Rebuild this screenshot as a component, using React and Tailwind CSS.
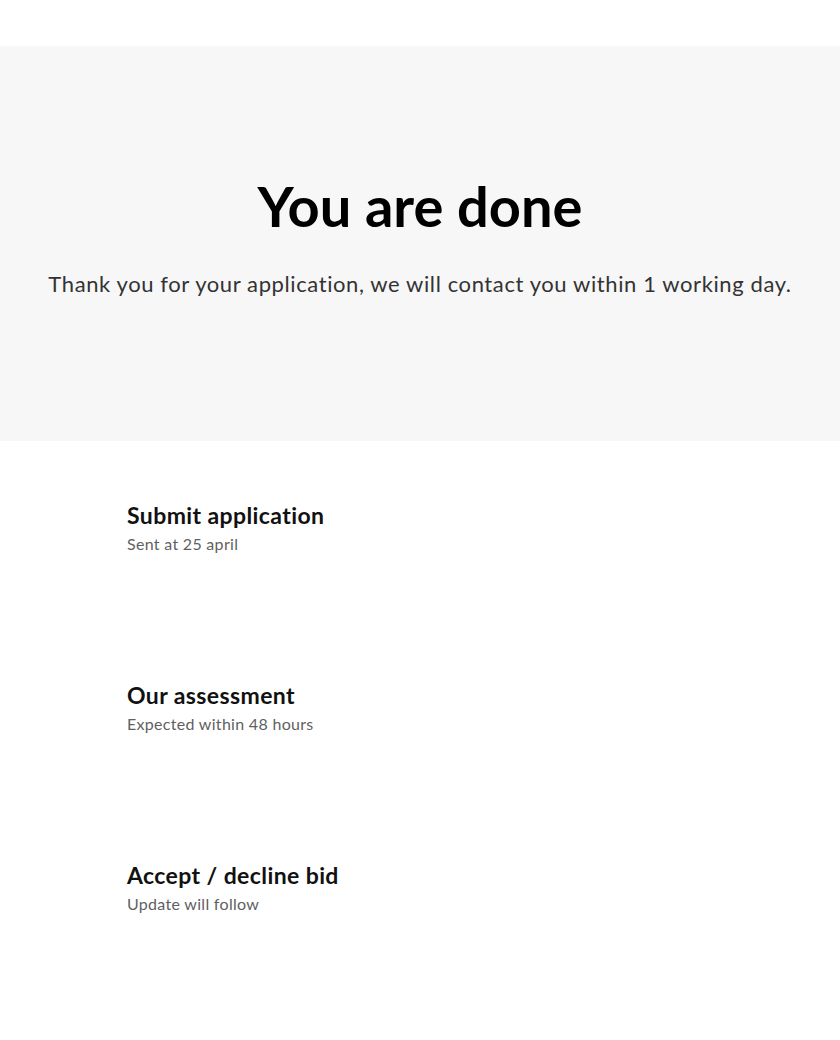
import React from 'react';

const steps = [
  { title: 'Submit application', sub: 'Sent at 25 april' },
  { title: 'Our assessment', sub: 'Expected within 48 hours' },
  { title: 'Accept / decline bid', sub: 'Update will follow' },
];

const App = () => {
  return (
    <div className="min-h-screen bg-white font-['Lato',sans-serif]">
      <div className="h-[46px]" />
      <section className="bg-[#f7f7f7] h-[395px] flex flex-col items-center pt-[128px]">
        <h1 className="text-[56px] leading-[64px] font-bold text-black">You are done</h1>
        <p className="mt-[31px] text-[22px] leading-[30px] tracking-[0.6px] text-[#333]">
          Thank you for your application, we will contact you within 1 working day.
        </p>
      </section>
      <div className="pl-[127px] pt-[60px] flex flex-col gap-[126px]">
        {steps.map((s) => (
          <div key={s.title}>
            <h3 className="text-[23px] leading-[28px] font-bold tracking-[0.4px] text-[#111]">{s.title}</h3>
            <p className="mt-[4px] text-[16px] leading-[22px] tracking-[0.3px] text-[#5f5f5f]">{s.sub}</p>
          </div>
        ))}
      </div>
    </div>
  );
};

export default App;
